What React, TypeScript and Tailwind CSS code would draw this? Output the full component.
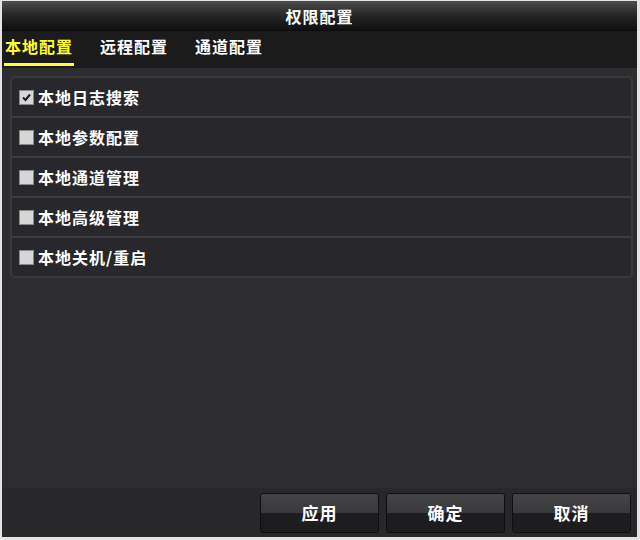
import { useState } from "react";

const FONT = { fontFamily: '"Noto Sans CJK SC", "Noto Sans", sans-serif' };

const tabs = ["本地配置", "远程配置", "通道配置"];

const perms = [
  { label: "本地日志搜索", checked: true },
  { label: "本地参数配置", checked: false },
  { label: "本地通道管理", checked: false },
  { label: "本地高级管理", checked: false },
  { label: "本地关机/重启", checked: false },
];

function Checkbox({ checked, onClick }: { checked: boolean; onClick: () => void }) {
  return (
    <button
      onClick={onClick}
      className="w-[15px] h-[15px] shrink-0 bg-[#d6d6d6] border border-[#8a8a8a] flex items-center justify-center"
    >
      {checked && (
        <svg width="11" height="11" viewBox="0 0 11 11">
          <path d="M2 5.5 L4.5 8 L9 2.5" stroke="#1a1a1a" strokeWidth="2" fill="none" />
        </svg>
      )}
    </button>
  );
}

function FooterButton({ label }: { label: string }) {
  return (
    <button className="w-[119px] h-[40px] rounded-[3px] border border-[#0e0e10] overflow-hidden flex flex-col relative">
      <div className="h-1/2 w-full bg-gradient-to-b from-[#444346] to-[#39383b]" />
      <div className="h-1/2 w-full bg-[#1d1c1f]" />
      <span className="absolute inset-0 flex items-center justify-center text-white text-[17px] font-bold tracking-[1px]">
        {label}
      </span>
    </button>
  );
}

export default function App() {
  const [active, setActive] = useState(0);
  const [items, setItems] = useState(perms);

  const toggle = (i: number) =>
    setItems(items.map((it, idx) => (idx === i ? { ...it, checked: !it.checked } : it)));

  return (
    <div className="w-[640px] h-[540px] bg-[#e4e4e4] pl-[2px] pt-[1px] pr-[3px] pb-[3px]" style={FONT}>
      <div className="w-full h-full flex flex-col bg-[#2d2c2f]">
        {/* Title bar */}
        <div className="h-[30px] shrink-0 flex items-center justify-center bg-gradient-to-b from-[#4e4e4e] via-[#262626] to-[#0f0f0f] border-b border-[#0a0a0a]">
          <span className="text-white text-[16px] font-bold tracking-[1px]">权限配置</span>
        </div>

        {/* Tabs */}
        <div className="h-[37px] shrink-0 bg-[#1b1b1b] flex items-end pl-[2px] gap-[25px]">
          {tabs.map((t, i) => (
            <button
              key={t}
              onClick={() => setActive(i)}
              className={
                "h-full px-[1px] pb-[1px] mb-[2px] flex items-center text-[16px] font-bold tracking-[1px] border-b-[3px] " +
                (active === i ? "text-[#ffff33] border-[#ffff33]" : "text-white border-transparent")
              }
            >
              {t}
            </button>
          ))}
        </div>

        {/* Content */}
        <div className="flex-1 pl-[8px] pr-[4px] pt-[8px]">
          <div className="rounded-[5px] border-2 border-[#3a393d] bg-[#28272b] flex flex-col">
            {items.map((it, i) => (
              <div
                key={it.label}
                className={
                  "flex items-center gap-[4px] pl-[7px] " +
                  (i < items.length - 1 ? "h-[40px] border-b-2 border-[#3d3c40]" : "h-[38px]")
                }
              >
                <Checkbox checked={it.checked} onClick={() => toggle(i)} />
                <span className="text-white text-[16px] font-bold tracking-[1px]">{it.label}</span>
              </div>
            ))}
          </div>
        </div>

        {/* Footer */}
        <div className="h-[49px] shrink-0 bg-[#28272a] flex items-center justify-end gap-[7px] pr-[6px]">
          <FooterButton label="应用" />
          <FooterButton label="确定" />
          <FooterButton label="取消" />
        </div>
      </div>
    </div>
  );
}
